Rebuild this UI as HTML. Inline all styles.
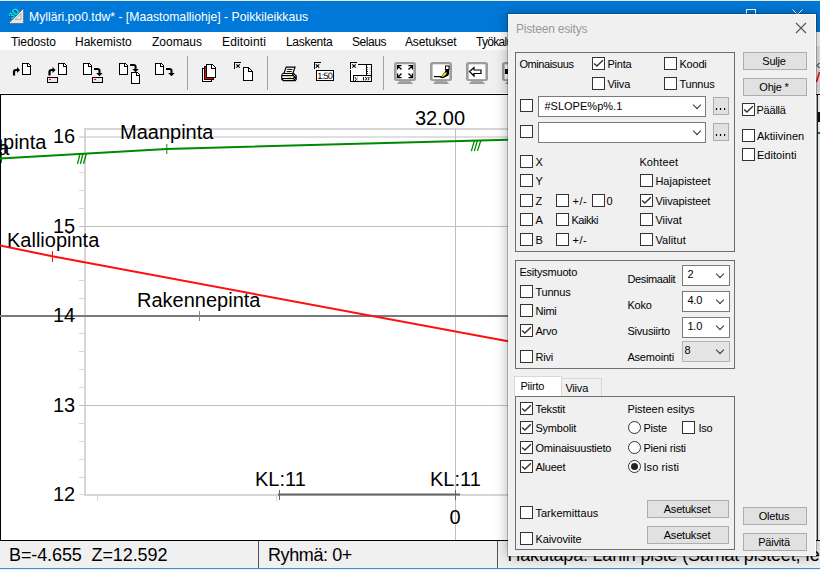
<!DOCTYPE html>
<html><head><meta charset="utf-8">
<style>
*{margin:0;padding:0;box-sizing:border-box}
html,body{width:820px;height:570px;overflow:hidden;background:#f0f0f0}
body{position:relative;font-family:"Liberation Sans",sans-serif;color:#000}
.a{position:absolute}
.t{position:absolute;white-space:pre;line-height:1}
#title{left:0;top:1px;width:820px;height:31px;background:#0078d7}
#row0{left:0;top:0;width:820px;height:1px;background:#ece9e4}
#menu{left:0;top:32px;width:820px;height:18px;background:#fff}
#menu .t{font-size:12px;top:35px}
#tool{left:0;top:50px;width:820px;height:43px;background:#f0f0f0}
#plot{left:0;top:93px;width:820px;height:448px;background:#fff}
#status{left:0;top:541px;width:820px;height:27px;background:#f0f0f0}
.pl{font-size:20px;color:#000}
/* dialog */
#dlg{left:507px;top:13px;width:310px;height:544px;background:#f0f0f0;border:1px solid rgba(0,0,0,0.24);background-clip:padding-box;box-shadow:inset -1px -1px 0 #fafafa,inset 0 1px 0 #fafafa,inset 1px 0 0 #f3f3f3,0 0 12px rgba(0,0,0,0.28)}
.d{font-size:11px;letter-spacing:-0.2px;color:#000;margin-left:-0.6px}
.cb{position:absolute;width:13px;height:13px;border:1px solid #333;background:#fff}
.grp{position:absolute;border:1px solid #6e6e6e}
.btn{position:absolute;background:#e1e1e1;border:1px solid #adadad;font-size:11px;text-align:center;letter-spacing:-0.2px;padding-right:2px}
.cmb{position:absolute;background:#fff;border:1px solid #7a7a7a}
.chev{position:absolute;width:6px;height:6px;border-right:1px solid #333;border-bottom:1px solid #333;transform:rotate(45deg)}
.rad{position:absolute;width:13px;height:13px;border:1px solid #333;border-radius:50%;background:#fff}
</style></head><body>
<div id="row0" class="a"></div><div id="title" class="a"></div>
<svg class="a" style="left:6px;top:6px" width="22" height="22" viewBox="0 0 22 22">
<path d="M17.6 2.2L17.6 17.6L2.4 17.6Z" fill="#e6e6e6" stroke="#333" stroke-width="0.8" stroke-dasharray="1 0.6"/>
<path d="M9 13.5L15 7.5M9 13.5H15M15 7.5V13.5" stroke="#999" stroke-width="0.7" fill="none"/>
<text x="0" y="0" transform="translate(5.6 14.2) rotate(-45)" font-family="Liberation Sans" font-weight="bold" font-size="9" fill="#002030">3D</text><text x="0" y="0" transform="translate(6 13.8) rotate(-45)" font-family="Liberation Sans" font-weight="bold" font-size="9" fill="#10f0f0">3D</text>
</svg>
<div class="t" style="left:29px;top:11px;font-size:12.2px;color:#fff">Mylläri.po0.tdw* - [Maastomalliohje] - Poikkileikkaus</div>
<div id="menu" class="a">
</div>
<div class="t" style="left:11px;top:36px;font-size:12px;letter-spacing:-0.1px">Tiedosto</div>
<div class="t" style="left:75px;top:36px;font-size:12px">Hakemisto</div>
<div class="t" style="left:152px;top:36px;font-size:12px">Zoomaus</div>
<div class="t" style="left:222px;top:36px;font-size:12px;letter-spacing:0.15px">Editointi</div>
<div class="t" style="left:286px;top:36px;font-size:12px;letter-spacing:-0.3px">Laskenta</div>
<div class="t" style="left:352px;top:36px;font-size:12px;letter-spacing:-0.45px">Selaus</div>
<div class="t" style="left:405px;top:36px;font-size:12px;letter-spacing:-0.15px">Asetukset</div>
<div class="t" style="left:476px;top:36px;font-size:12px;letter-spacing:-0.7px">Työkalut</div>
<div id="tool" class="a"></div>
<!--ICONS-->
<svg class="a" style="left:0;top:0" width="820" height="93" viewBox="0 0 820 93" shape-rendering="crispEdges">
<defs>
  <g id="doc">
    <path d="M0.5 0.5H6.5L8.5 2.5V11.5H0.5Z" fill="#fff" stroke="#000" stroke-width="1.4"/>
    <path d="M5.5 0.5V3.5H8.5" fill="none" stroke="#000" stroke-width="1.2"/>
  </g>
  <g id="arrR">
    <path d="M1.5 9V5.5Q1.5 3.5 3.5 3.5H5" fill="none" stroke="#000" stroke-width="2.2" shape-rendering="auto"/>
    <path d="M4.5 0.5L7.5 3.5L4.5 6.5Z" fill="#000" shape-rendering="auto"/>
  </g>
  <g id="arrD">
    <path d="M0.4 2H4Q5.9 2 5.9 3.8V6.5" fill="none" stroke="#000" stroke-width="2" shape-rendering="auto"/>
    <path d="M2.6 6H9.1L5.85 9.3Z" fill="#000" shape-rendering="auto"/>
  </g>
  <g id="bar">
    <rect x="0.5" y="0.5" width="10" height="5" fill="#e8e8e8" stroke="#000" stroke-width="1.2"/>
    <rect x="2" y="2" width="2" height="1" fill="#f00"/>
  </g>
  <g id="xb">
    <path d="M0.5 7V0.5H7" fill="none" stroke="#000" stroke-width="1"/>
    <path d="M2.3 2.3L5.7 5.7M5.7 2.3L2.3 5.7" stroke="#000" stroke-width="1.1" shape-rendering="auto"/>
  </g>
  <g id="mon" shape-rendering="auto">
    <rect x="0" y="0" width="22" height="19" rx="2.5" fill="#9c9c9c"/>
    <rect x="2.6" y="2.3" width="16.8" height="14.8" fill="#fff"/>
    <rect x="5" y="19" width="12" height="1" fill="#a8a8a8"/>
    <path d="M3 22H19L17.5 20H4.5Z" fill="#9c9c9c"/>
  </g>
</defs>
<!-- icon1 -->
<use href="#arrR" x="12.5" y="66.5"/>
<use href="#doc" x="22" y="63"/>
<!-- icon2 -->
<use href="#arrR" x="48" y="66.5"/>
<use href="#doc" x="58" y="63"/>
<use href="#bar" x="47" y="77"/>
<!-- icon3 -->
<use href="#doc" x="83" y="63"/>
<use href="#arrD" x="93.6" y="67"/>
<use href="#bar" x="92" y="77"/>
<!-- icon4 -->
<use href="#doc" x="119" y="63"/>
<use href="#arrD" x="129.7" y="63"/>
<use href="#doc" x="131" y="72"/>
<!-- icon5 -->
<use href="#doc" x="155" y="63"/>
<use href="#arrD" x="165.6" y="67"/>
<rect x="187" y="56" width="1" height="34" fill="#a0a0a0"/>
<!-- copy icon -->
<rect x="202.5" y="68.5" width="9" height="13" fill="#fff" stroke="#000" stroke-width="1"/>
<rect x="204.5" y="66.5" width="9" height="13" fill="#fff" stroke="#000" stroke-width="1"/>
<path d="M205.5 67V78.5H213" fill="none" stroke="#f00" stroke-width="1"/>
<path d="M206.5 64.5H212.5L215.5 67.5V77.5H206.5Z" fill="#fff" stroke="#000" stroke-width="1"/>
<path d="M211.5 64.5V68.5H215.5" fill="none" stroke="#000" stroke-width="1"/>
<!-- icon7 -->
<use href="#xb" x="234" y="62"/>
<path d="M243.5 67.5H248.5L252.5 71.5V80.5H243.5Z" fill="#fff" stroke="#000" stroke-width="1"/><path d="M248.5 67.5V71.5H252.5" fill="none" stroke="#000" stroke-width="1"/>
<rect x="267" y="56" width="1" height="34" fill="#a0a0a0"/>
<!-- printer -->
<g shape-rendering="auto">
<path d="M286.2 67.2H295L292.8 73.6H283.8Z" fill="#fff" stroke="#000" stroke-width="1.2"/>
<path d="M287.2 69.4H292.6M286.6 71.6H291.8" stroke="#000" stroke-width="1"/>
<path d="M282.5 73H294L296.8 75.5V79.5L295.5 81.2H283L281.2 79.5V75Z" fill="#000"/>
<rect x="282.6" y="74" width="9.6" height="1" fill="#fff"/>
<rect x="282.3" y="76.2" width="11" height="1.8" fill="#fff"/>
<rect x="287.8" y="76.9" width="3.3" height="1.1" fill="#f2e600"/>
<rect x="283.2" y="79.1" width="10" height="0.9" fill="#fff"/>
<path d="M293.5 74.5L294.5 75.5M295.5 74.5L294.5 75.5M293.5 76.5L294.5 75.5M295.5 76.5L296 77M293.5 79.5L294.5 78.5L295.5 79.5" stroke="#fff" stroke-width="0.7"/>
</g>
<!-- 1:50 -->
<use href="#xb" x="313.5" y="62"/>
<rect x="316.5" y="70.5" width="17" height="10" fill="#fff" stroke="#000" stroke-width="1.3"/>
<text x="317.3" y="78.6" font-family="Liberation Sans" font-size="9.2" fill="#000" letter-spacing="-0.75" style="text-rendering:geometricPrecision">1:50</text>
<!-- layout -->
<rect x="351" y="64" width="20" height="17" fill="#fff"/>
<path d="M350.5 69.5V81.5H371.5V64.5H357.5" fill="none" stroke="#000" stroke-width="1.3"/>
<use href="#xb" x="350" y="62"/>
<path d="M366.5 65V75.5M353.5 81V75.5H371" fill="none" stroke="#000" stroke-width="1"/>
<rect x="367" y="66.5" width="1" height="1.5" fill="#f0f"/><rect x="367" y="68.5" width="1" height="1.5" fill="#0c0"/><rect x="367" y="70.5" width="1" height="1.5" fill="#00f"/><rect x="367" y="72.5" width="1" height="1.5" fill="#f00"/>
<path d="M368.5 67H370.5M368.5 69H370.5M368.5 71H370.5M368.5 73H370.5" stroke="#c8c8c8" stroke-width="0.8"/>
<rect x="357" y="76" width="1" height="5" fill="#ccc"/>
<path d="M355 77L356.5 80M355 80.5H356" stroke="#000" stroke-width="0.9" shape-rendering="auto"/>
<path d="M363.5 77V80.5M365 77.5Q366.5 77 366.5 79Q366 80.5 365 80M367.5 77.5Q369 77 369 79Q368.5 80.5 367.5 80M369.5 77.5L370.5 77" stroke="#000" stroke-width="0.9" fill="none" shape-rendering="auto"/>
<rect x="383" y="56" width="1" height="34" fill="#a0a0a0"/>
<!-- monitors -->
<use href="#mon" x="394" y="62"/>
<g stroke="#000" stroke-width="1.3" fill="none" shape-rendering="auto">
 <path d="M397.6 69.5V65.6H401.5M397.6 65.6L401.5 69.5"/>
 <path d="M412.4 69.5V65.6H408.5M412.4 65.6L408.5 69.5"/>
 <path d="M397.6 73.5V77.6H401.5M397.6 77.6L401.5 73.5"/>
 <path d="M412.4 73.5V77.6H408.5M412.4 77.6L408.5 73.5"/>
</g>
<use href="#mon" x="430" y="62"/>
<g shape-rendering="auto">
<path d="M434 76.6H441" stroke="#000" stroke-width="1.2"/>
<path d="M440.5 77.2L445 71.5Q445.5 70 446 69.5H449V73.5Q449 75 447.5 76L443.5 78H440.5Z" fill="#000"/>
<path d="M441.5 76.8L444.5 72.5H447L446 74.5L443.2 76.8Z" fill="#f5e400"/>
<rect x="445.5" y="66" width="3.5" height="3.5" fill="#fff" stroke="#000" stroke-width="1"/>
</g>
<use href="#mon" x="466" y="62"/>
<path d="M469.5 71.5L474 67.5V70H481V73.5H474V76Z" fill="#fff" stroke="#000" stroke-width="1.2" shape-rendering="auto"/>
<use href="#mon" x="502" y="62"/>
<rect x="505" y="69" width="3" height="5" fill="#000"/>
</svg>

<!--/ICONS-->
<div id="plot" class="a"></div>
<div class="a" style="left:0;top:94px;width:820px;height:1px;background:#000"></div>
<div class="a" style="left:0;top:94px;width:1px;height:447px;background:#000"></div>
<div class="a" style="left:0;top:540px;width:820px;height:1px;background:#000"></div>
<div id="status" class="a"></div>
<div class="a" style="left:0;top:568px;width:820px;height:1px;background:#3b8de0"></div>
<div class="a" style="left:258px;top:541px;width:1px;height:27px;background:#555"></div>
<div class="a" style="left:497px;top:541px;width:1px;height:27px;background:#555"></div>
<div class="t" style="left:9px;top:546px;font-size:18px;letter-spacing:-0.1px">B=-4.655  Z=12.592</div>
<div class="t" style="left:268px;top:546px;font-size:18px;letter-spacing:-0.4px">Ryhmä: 0+</div>
<div class="t" style="left:507.5px;top:546px;font-size:18px;letter-spacing:-0.2px">Hakutapa: Lähin piste (Samat pisteet, Ie</div>

<!-- plot svg -->
<svg class="a" style="left:0;top:0" width="820" height="570" viewBox="0 0 820 570">
  <g stroke="#d6d6d6" stroke-width="2" fill="none">
    <line x1="84" y1="129" x2="508" y2="129"/>
    <line x1="85" y1="129" x2="85" y2="495"/>
    <line x1="84" y1="495" x2="508" y2="495"/>
  </g>
  <g stroke="#c0c0c0" stroke-width="1" fill="none">
    <line x1="79" y1="137" x2="508" y2="137"/>
    <line x1="79" y1="226.5" x2="508" y2="226.5"/>
    <line x1="79" y1="405.5" x2="508" y2="405.5"/>
    <line x1="455.5" y1="129" x2="455.5" y2="540"/>
  </g>
  <line x1="0" y1="316" x2="508" y2="316" stroke="#7a7a7a" stroke-width="2"/>
  <g stroke="#d6d6d6" stroke-width="1">
    <line x1="79" y1="154.5" x2="85" y2="154.5"/>
    <line x1="79" y1="172.5" x2="85" y2="172.5"/>
    <line x1="79" y1="190.5" x2="85" y2="190.5"/>
    <line x1="79" y1="208.5" x2="85" y2="208.5"/>
    <line x1="79" y1="244.5" x2="85" y2="244.5"/>
    <line x1="79" y1="262.5" x2="85" y2="262.5"/>
    <line x1="79" y1="280.5" x2="85" y2="280.5"/>
    <line x1="79" y1="298.5" x2="85" y2="298.5"/>
    <line x1="79" y1="333.5" x2="85" y2="333.5"/>
    <line x1="79" y1="351.5" x2="85" y2="351.5"/>
    <line x1="79" y1="369.5" x2="85" y2="369.5"/>
    <line x1="79" y1="387.5" x2="85" y2="387.5"/>
    <line x1="79" y1="423.5" x2="85" y2="423.5"/>
    <line x1="79" y1="441.5" x2="85" y2="441.5"/>
    <line x1="79" y1="459.5" x2="85" y2="459.5"/>
    <line x1="79" y1="477.5" x2="85" y2="477.5"/>
    <line x1="79" y1="494.5" x2="85" y2="494.5"/>
    <line x1="97.5" y1="495" x2="97.5" y2="501"/>
    <line x1="276.5" y1="495" x2="276.5" y2="501"/>
  </g>
  <!-- green -->
  <polyline points="0,158.6 166.8,149 508,139.7" stroke="#008a00" stroke-width="2" fill="none"/>
  <line x1="166.8" y1="144" x2="166.8" y2="154" stroke="#0a8a0a" stroke-width="1"/>
  <line x1="1.5" y1="152" x2="1.5" y2="163" stroke="#0a8a0a" stroke-width="1"/>
  <g stroke="#008a00" stroke-width="1.3" stroke-linecap="round">
    <line x1="77.6" y1="163.4" x2="80" y2="154"/><line x1="80.5" y1="163.4" x2="82.9" y2="154"/><line x1="83.6" y1="163.2" x2="86.3" y2="154"/>
    <line x1="471.5" y1="150.6" x2="474.2" y2="141.3"/><line x1="474.5" y1="150.6" x2="477.1" y2="141.3"/><line x1="477.6" y1="150.4" x2="480.6" y2="141.3"/>
  </g>
  <!-- red -->
  <polyline points="0,245.4 52.3,256.3 508,341.3" stroke="#ff1010" stroke-width="2" fill="none"/>
  <line x1="52.5" y1="251" x2="52.5" y2="262" stroke="#ff1010" stroke-width="1"/>
  <line x1="199.5" y1="311" x2="199.5" y2="321" stroke="#888" stroke-width="1"/>
  <!-- KL base line -->
  <line x1="278" y1="494.5" x2="460" y2="494.5" stroke="#666" stroke-width="2"/>
  <line x1="279.5" y1="490" x2="279.5" y2="500" stroke="#666" stroke-width="1"/>
  <line x1="455.5" y1="490" x2="455.5" y2="500" stroke="#666" stroke-width="1"/>
</svg>
<div class="t pl" style="left:53px;top:126px">16</div>
<div class="t pl" style="left:53px;top:216px">15</div>
<div class="t pl" style="left:53px;top:305px">14</div>
<div class="t pl" style="left:53px;top:395px">13</div>
<div class="t pl" style="left:53px;top:484px">12</div>
<div class="t pl" style="left:415px;top:108px">32.00</div>
<div class="t pl" style="left:120px;top:122px">Maanpinta</div>
<div class="t pl" style="left:7px;top:230px">Kalliopinta</div>
<div class="t pl" style="left:137px;top:290px">Rakennepinta</div>
<div class="t pl" style="left:255px;top:469px">KL:11</div>
<div class="t pl" style="left:430px;top:469px">KL:11</div>
<div class="t pl" style="left:449.5px;top:507px">0</div>
<div class="t pl" style="left:-47px;top:132px">Maanpinta</div>
<div class="t pl" style="left:-84px;top:138px">Maanpinta</div>

<!-- right strip -->
<div class="a" style="left:816px;top:32px;width:4px;height:14px;background:#fafafa"></div>
<div class="a" style="left:816px;top:46px;width:4px;height:47px;background:#e4e4e4"></div>
<svg class="a" style="left:816px;top:60px" width="4" height="26"><path d="M3.5 3L1 5.5L3.5 8" stroke="#000" stroke-width="1" fill="none"/><path d="M3.5 12L0.5 22" stroke="#f00" stroke-width="1.5"/></svg>
<div class="a" style="left:817px;top:94px;width:1px;height:446px;background:#222"></div>
<div class="a" style="left:818px;top:112px;width:2px;height:10px;background:#111"></div>
<div class="a" style="left:818px;top:132px;width:2px;height:2px;background:#0a8a0a"></div>
<svg class="a" style="left:740px;top:6px" width="70" height="10"><rect x="6.5" y="3.5" width="9" height="8" fill="none" stroke="#fff" stroke-width="1"/><path d="M52.5 3.5L62.5 13.5M62.5 3.5L52.5 13.5" stroke="#fff" stroke-width="1"/></svg>
<!-- dialog -->
<div id="dlg" class="a"></div>
<div class="t" style="left:516px;top:23px;font-size:12px;color:#999;letter-spacing:-0.2px">Pisteen esitys</div>
<svg class="a" style="left:795px;top:22px" width="12" height="12"><path d="M1 1L11 11M11 1L1 11" stroke="#555" stroke-width="1.1"/></svg>

<div class="grp" style="left:515px;top:52px;width:220px;height:200px"></div>
<div class="t d" style="left:520px;top:59px;letter-spacing:-0.40px">Ominaisuus</div>
<div class="cb" style="left:592px;top:57px"><svg width="11" height="11" style="position:absolute;left:0;top:0"><path d="M1.1 5.4L3.9 8L9.9 2.3" fill="none" stroke="#333" stroke-width="1.4"/></svg></div><div class="t d" style="left:608px;top:59px">Pinta</div>
<div class="cb" style="left:664px;top:57px"></div><div class="t d" style="left:680px;top:59px">Koodi</div>
<div class="cb" style="left:592px;top:77px"></div><div class="t d" style="left:608px;top:79px">Viiva</div>
<div class="cb" style="left:664px;top:77px"></div><div class="t d" style="left:680px;top:79px">Tunnus</div>
<div class="cb" style="left:520px;top:99px"></div>
<div class="cmb" style="left:538px;top:96px;width:168px;height:21px"></div>
<div class="t d" style="left:545px;top:101px;letter-spacing:0.02px">#SLOPE%p%.1</div>
<div class="chev" style="left:694px;top:102px"></div>
<div class="btn" style="left:713px;top:97px;width:16px;height:18px"></div><svg class="a" style="left:714px;top:108px" width="14" height="3"><rect x="1.9" y="0" width="1.2" height="2" fill="#000"/><rect x="5.9" y="0" width="1.2" height="2" fill="#000"/><rect x="10" y="0" width="1.2" height="2" fill="#000"/></svg>
<div class="cb" style="left:520px;top:125px"></div>
<div class="cmb" style="left:538px;top:122px;width:168px;height:21px"></div>
<div class="chev" style="left:694px;top:128px"></div>
<div class="btn" style="left:713px;top:123px;width:16px;height:18px"></div><svg class="a" style="left:714px;top:134px" width="14" height="3"><rect x="1.9" y="0" width="1.2" height="2" fill="#000"/><rect x="5.9" y="0" width="1.2" height="2" fill="#000"/><rect x="10" y="0" width="1.2" height="2" fill="#000"/></svg>

<div class="cb" style="left:520px;top:155px"></div><div class="t d" style="left:536px;top:157px">X</div>
<div class="cb" style="left:520px;top:174px"></div><div class="t d" style="left:536px;top:176px">Y</div>
<div class="cb" style="left:520px;top:194px"></div><div class="t d" style="left:536px;top:196px">Z</div>
<div class="cb" style="left:520px;top:213px"></div><div class="t d" style="left:536px;top:215px">A</div>
<div class="cb" style="left:520px;top:233px"></div><div class="t d" style="left:536px;top:235px">B</div>
<div class="cb" style="left:556px;top:194px"></div><div class="t d" style="left:573px;top:196px;letter-spacing:0.60px">+/-</div>
<div class="cb" style="left:592px;top:194px"></div><div class="t d" style="left:607px;top:196px">0</div>
<div class="cb" style="left:556px;top:213px"></div><div class="t d" style="left:572px;top:215px;letter-spacing:-0.45px">Kaikki</div>
<div class="cb" style="left:556px;top:233px"></div><div class="t d" style="left:573px;top:235px;letter-spacing:0.60px">+/-</div>
<div class="t d" style="left:640px;top:157px;letter-spacing:0.13px">Kohteet</div>
<div class="cb" style="left:640px;top:174px"></div><div class="t d" style="left:656px;top:176px;letter-spacing:0.00px">Hajapisteet</div>
<div class="cb" style="left:640px;top:194px"><svg width="11" height="11" style="position:absolute;left:0;top:0"><path d="M1.1 5.4L3.9 8L9.9 2.3" fill="none" stroke="#333" stroke-width="1.4"/></svg></div><div class="t d" style="left:656px;top:196px;letter-spacing:-0.10px">Viivapisteet</div>
<div class="cb" style="left:640px;top:213px"></div><div class="t d" style="left:656px;top:215px;letter-spacing:-0.05px">Viivat</div>
<div class="cb" style="left:640px;top:233px"></div><div class="t d" style="left:656px;top:235px;letter-spacing:0.10px">Valitut</div>

<div class="btn" style="left:743px;top:52px;width:64px;height:18px;padding-top:2px">Sulje</div>
<div class="btn" style="left:743px;top:78px;width:64px;height:18px;padding-top:2px">Ohje *</div>
<div class="cb" style="left:742px;top:103px"><svg width="11" height="11" style="position:absolute;left:0;top:0"><path d="M1.1 5.4L3.9 8L9.9 2.3" fill="none" stroke="#333" stroke-width="1.4"/></svg></div><div class="t d" style="left:757px;top:105px">Päällä</div>
<div class="cb" style="left:742px;top:129px"></div><div class="t d" style="left:757.5px;top:131px;letter-spacing:0.02px">Aktiivinen</div>
<div class="cb" style="left:742px;top:148px"></div><div class="t d" style="left:757.5px;top:150px;letter-spacing:0.05px">Editointi</div>

<div class="grp" style="left:515px;top:260px;width:220px;height:109px"></div>
<div class="t d" style="left:520px;top:267px">Esitysmuoto</div>
<div class="cb" style="left:520px;top:285px"></div><div class="t d" style="left:536px;top:287px">Tunnus</div>
<div class="cb" style="left:520px;top:304px"></div><div class="t d" style="left:536px;top:306px">Nimi</div>
<div class="cb" style="left:520px;top:324px"><svg width="11" height="11" style="position:absolute;left:0;top:0"><path d="M1.1 5.4L3.9 8L9.9 2.3" fill="none" stroke="#333" stroke-width="1.4"/></svg></div><div class="t d" style="left:536px;top:326px">Arvo</div>
<div class="cb" style="left:520px;top:350px"></div><div class="t d" style="left:536px;top:352px">Rivi</div>
<div class="t d" style="left:628px;top:274px;letter-spacing:-0.35px">Desimaalit</div>
<div class="t d" style="left:628px;top:300px">Koko</div>
<div class="t d" style="left:628px;top:326px">Sivusiirto</div>
<div class="t d" style="left:628px;top:352px">Asemointi</div>
<div class="cmb" style="left:682px;top:265px;width:48px;height:21px"></div><div class="t d" style="left:688px;top:269px">2</div><div class="chev" style="left:717px;top:271px"></div>
<div class="cmb" style="left:682px;top:291px;width:48px;height:21px"></div><div class="t d" style="left:688px;top:295px">4.0</div><div class="chev" style="left:717px;top:297px"></div>
<div class="cmb" style="left:682px;top:317px;width:48px;height:21px"></div><div class="t d" style="left:688px;top:321px">1.0</div><div class="chev" style="left:717px;top:323px"></div>
<div class="cmb" style="left:682px;top:341px;width:48px;height:21px;background:#e5e5e5;border-color:#b4b4b4"></div><div class="t d" style="left:685px;top:345px">8</div><div class="chev" style="left:717px;top:347px"></div>

<!-- tabs -->
<div class="a" style="left:561px;top:378px;width:41px;height:18px;border:1px solid #d9d9d9;border-bottom:none;background:#f0f0f0"></div>
<div class="a" style="left:514px;top:376px;width:48px;height:20px;border:1px solid #d9d9d9;border-bottom:none;background:#fff"></div>
<div class="a" style="left:515px;top:396px;width:220px;height:154px;border:1px solid #6e6e6e"></div>
<div class="t d" style="left:521px;top:381px">Piirto</div>
<div class="t d" style="left:566px;top:383px">Viiva</div>
<div class="cb" style="left:520px;top:402px"><svg width="11" height="11" style="position:absolute;left:0;top:0"><path d="M1.1 5.4L3.9 8L9.9 2.3" fill="none" stroke="#333" stroke-width="1.4"/></svg></div><div class="t d" style="left:536px;top:404px">Tekstit</div>
<div class="cb" style="left:520px;top:421px"><svg width="11" height="11" style="position:absolute;left:0;top:0"><path d="M1.1 5.4L3.9 8L9.9 2.3" fill="none" stroke="#333" stroke-width="1.4"/></svg></div><div class="t d" style="left:536px;top:423px">Symbolit</div>
<div class="cb" style="left:520px;top:441px"><svg width="11" height="11" style="position:absolute;left:0;top:0"><path d="M1.1 5.4L3.9 8L9.9 2.3" fill="none" stroke="#333" stroke-width="1.4"/></svg></div><div class="t d" style="left:536px;top:443px">Ominaisuustieto</div>
<div class="cb" style="left:520px;top:460px"><svg width="11" height="11" style="position:absolute;left:0;top:0"><path d="M1.1 5.4L3.9 8L9.9 2.3" fill="none" stroke="#333" stroke-width="1.4"/></svg></div><div class="t d" style="left:536px;top:462px">Alueet</div>
<div class="t d" style="left:628px;top:404px;letter-spacing:-0.05px">Pisteen esitys</div>
<div class="rad" style="left:628px;top:421px"></div><div class="t d" style="left:644px;top:423px;letter-spacing:-0.20px">Piste</div>
<div class="cb" style="left:682px;top:421px"></div><div class="t d" style="left:699px;top:423px;letter-spacing:-0.20px">Iso</div>
<div class="rad" style="left:628px;top:441px"></div><div class="t d" style="left:644px;top:443px;letter-spacing:-0.20px">Pieni risti</div>
<div class="rad" style="left:628px;top:460px"></div><div class="a" style="left:631px;top:463px;width:7px;height:7px;border-radius:50%;background:#222"></div><div class="t d" style="left:644px;top:462px;letter-spacing:0.10px">Iso risti</div>
<div class="cb" style="left:520px;top:506px"></div><div class="t d" style="left:536px;top:508px;letter-spacing:0.05px">Tarkemittaus</div>
<div class="cb" style="left:520px;top:532px"></div><div class="t d" style="left:536px;top:534px;letter-spacing:-0.10px">Kaivoviite</div>
<div class="btn" style="left:647px;top:500px;width:82px;height:18px;padding-top:2px">Asetukset</div>
<div class="btn" style="left:647px;top:526px;width:82px;height:18px;padding-top:2px">Asetukset</div>
<div class="btn" style="left:743px;top:507px;width:64px;height:18px;padding-top:2px">Oletus</div>
<div class="btn" style="left:743px;top:533px;width:64px;height:18px;padding-top:2px">Päivitä</div>
</body></html>
